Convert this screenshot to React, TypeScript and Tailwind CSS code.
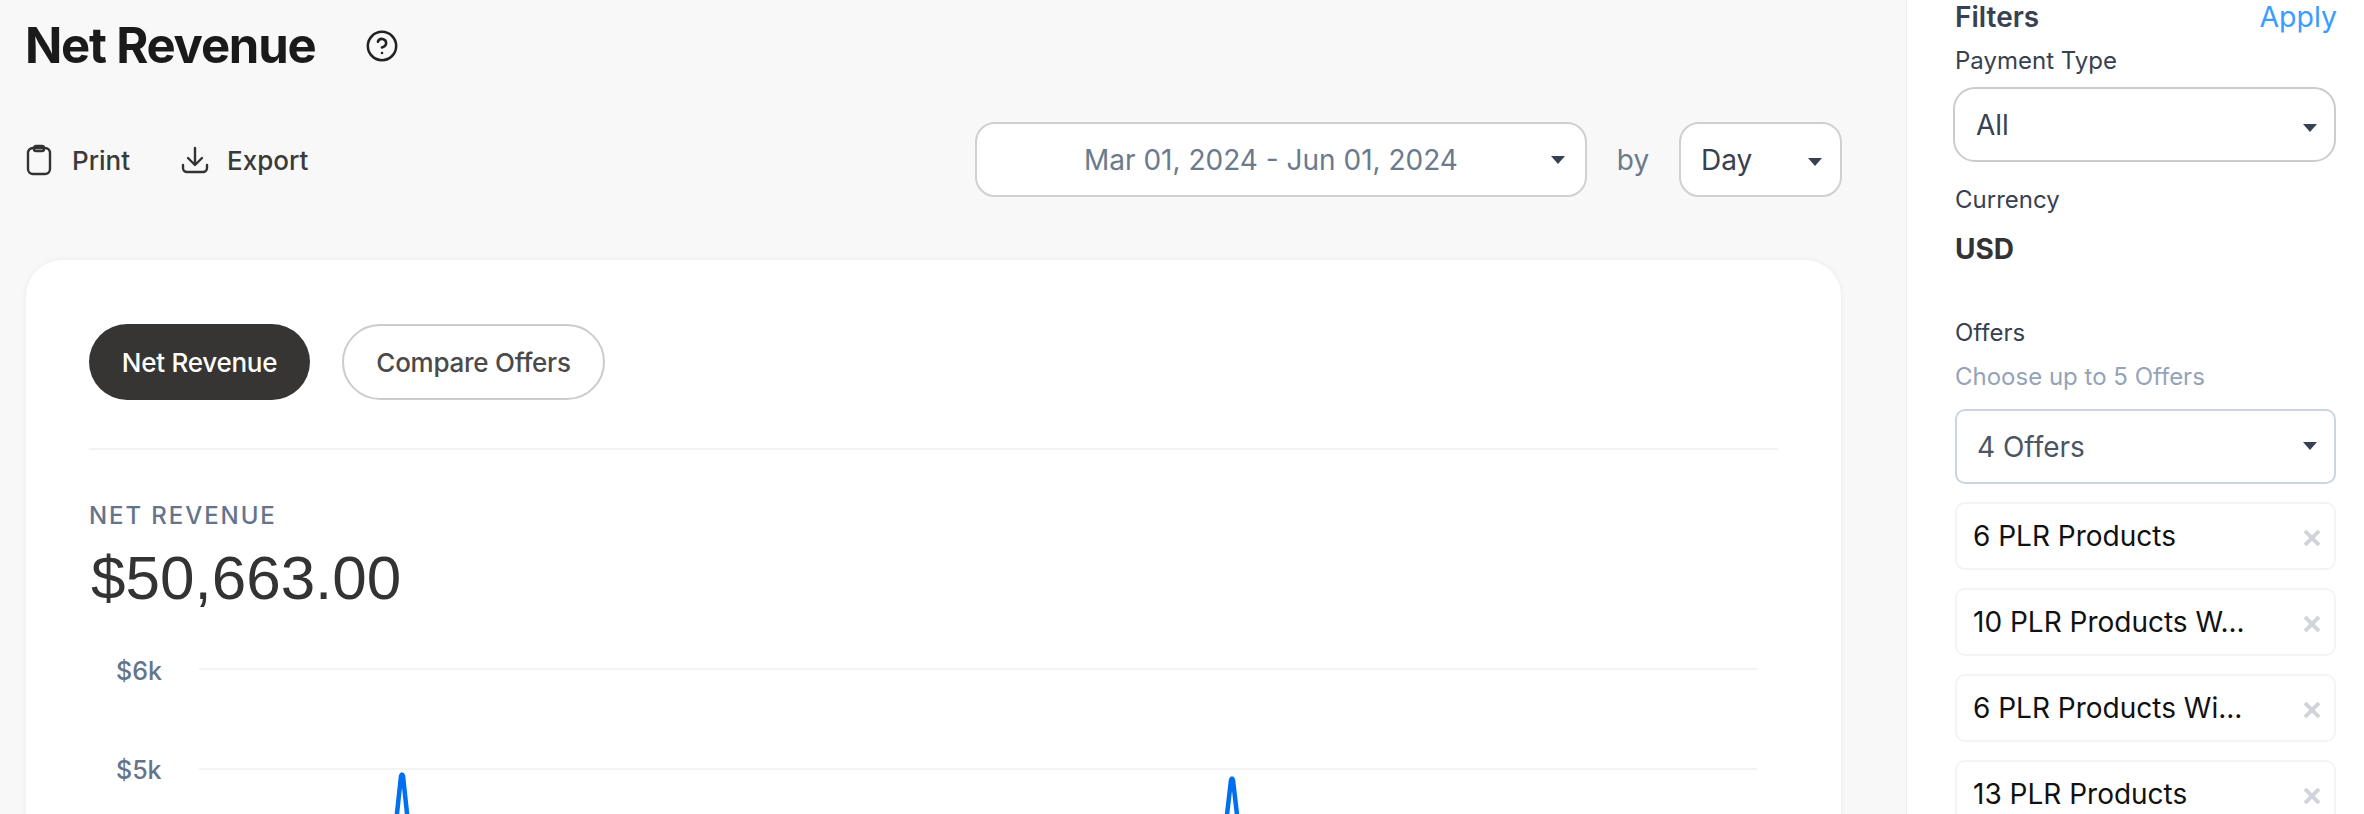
import { CircleHelp } from "lucide-react";

const offers = ["6 PLR Products", "10 PLR Products W...", "6 PLR Products Wi...", "13 PLR Products"];

const Caret = ({ className = "" }: { className?: string }) => (
  <span className={`w-0 h-0 border-x-[7px] border-x-transparent border-t-[8px] border-t-[#374151] ${className}`} />
);

const ClipboardIcon = () => (
  <svg width="26" height="32" viewBox="0 0 26 32" fill="none" stroke="#333" strokeWidth="2.4">
    <rect x="2" y="4" width="22" height="26" rx="5" />
    <rect x="8" y="2" width="10" height="5" rx="2" />
  </svg>
);

const ExportIcon = () => (
  <svg width="28" height="28" viewBox="0 0 28 28" fill="none" stroke="#333" strokeWidth="2.4" strokeLinecap="round" strokeLinejoin="round">
    <path d="M14 2v16" />
    <path d="M7 12l7 7 7-7" />
    <path d="M2 19v3a4 4 0 0 0 4 4h16a4 4 0 0 0 4-4v-3" />
  </svg>
);

function Chart() {
  return (
    <svg width="1690" height="180" viewBox="0 0 1690 180" className="block mt-[30px]">
      <text x="27" y="38" fontSize="25" fontWeight="500" fill="#64748b" fontFamily="Inter">$6k</text>
      <text x="27" y="137" fontSize="25" fontWeight="500" fill="#64748b" fontFamily="Inter">$5k</text>
      <line x1="110" y1="27" x2="1668" y2="27" stroke="#f3f3f3" strokeWidth="2" />
      <line x1="110" y1="127" x2="1668" y2="127" stroke="#f3f3f3" strokeWidth="2" />
      <path d="M306 190 L312 134 Q313 131 314 134 L320 190" fill="none" stroke="#0070f0" strokeWidth="4.5" strokeLinejoin="round" />
      <path d="M1136 190 L1142 138 Q1143 135 1144 138 L1150 190" fill="none" stroke="#0070f0" strokeWidth="4.5" strokeLinejoin="round" />
    </svg>
  );
}

export default function App() {
  return (
    <div className="flex h-[814px] overflow-hidden bg-[#f8f8f8] font-['Inter',sans-serif]">
      <main className="w-[1906px] shrink-0 pl-[26px] pr-[64px]">
        <div className="flex items-center h-[91px] gap-[50px]">
          <h1 className="text-[49px] font-bold leading-none tracking-[-0.025em] text-[#1a1a1a] -ml-[1px]">Net Revenue</h1>
          <CircleHelp size={34} strokeWidth={1.8} className="text-[#222]" />
        </div>

        <div className="flex items-center mt-[31px] h-[75px]">
          <button className="flex items-center gap-[20px] text-[26px] font-medium text-[#3a3a3a] pt-[1px]">
            <ClipboardIcon /> Print
          </button>
          <button className="flex items-center gap-[18px] ml-[51px] text-[26px] font-medium text-[#3a3a3a] pt-[1px]">
            <ExportIcon /> Export
          </button>
          <div className="ml-auto flex items-center">
            <div className="relative flex items-center justify-center w-[612px] h-[75px] bg-white border-2 border-[#d0d0d0] rounded-[20px] text-[28px] text-[#6b7a8c] pr-[20px]">
              Mar 01, 2024 - Jun 01, 2024
              <Caret className="absolute right-[20px] top-[32px]" />
            </div>
            <span className="w-[92px] text-center text-[28px] text-[#6b7a8c]">by</span>
            <div className="relative flex items-center w-[163px] h-[75px] bg-white border-2 border-[#d0d0d0] rounded-[20px] pl-[20px] text-[28px] text-[#374151]">
              Day
              <Caret className="absolute right-[18px] top-[34px]" />
            </div>
          </div>
        </div>

        <section className="mt-[63px] mr-[1px] h-[600px] bg-white rounded-[36px] shadow-[0_0_6px_rgba(0,0,0,0.06)] px-[63px] pt-[64px]">
          <div className="flex gap-[32px] pb-[48px] border-b-2 border-[#f2f2f2]">
            <button className="h-[76px] w-[221px] rounded-full bg-[#363533] text-white text-[26px] font-medium tracking-[-0.01em] pt-[1px]">Net Revenue</button>
            <button className="h-[76px] w-[263px] rounded-full bg-white border-2 border-[#cccccc] text-[#4a4a4a] text-[26px] font-medium tracking-[-0.01em] pt-[1px]">Compare Offers</button>
          </div>
          <div className="mt-[52px] text-[24px] leading-[28px] font-medium tracking-[0.08em] text-[#64748b]">NET REVENUE</div>
          <div className="mt-[14px] pl-[2px] text-[62px] leading-[68px] text-[#333] font-['Liberation_Sans',sans-serif]">$50,663.00</div>
          <Chart />
        </section>
      </main>

      <aside className="w-[458px] shrink-0 bg-white border-l border-[#eeeeee] pl-[46px] pr-[28px] text-[#374151]">
        <div className="flex items-center justify-between h-[34px] pl-[2px]">
          <span className="text-[28px] font-semibold leading-none">Filters</span>
          <span className="text-[28.500px] leading-none text-[#3b9cff] -mr-[1px]">Apply</span>
        </div>
        <div className="mt-[11px] pl-[2px] text-[24px] leading-[32px]">Payment Type</div>
        <div className="relative flex items-center h-[75px] mt-[10px] border-2 border-[#cccccc] rounded-[22px] pl-[21px] text-[28px]">
          All
          <Caret className="absolute right-[17px] top-[35px]" />
        </div>
        <div className="mt-[22px] pl-[2px] text-[24px] leading-[32px]">Currency</div>
        <div className="mt-[16px] pl-[2px] text-[28px] leading-[34px] font-bold text-[#333]">USD</div>
        <div className="mt-[51px] pl-[2px] text-[24px] leading-[32px]">Offers</div>
        <div className="mt-[12px] pl-[2px] text-[24px] leading-[32px] text-[#94a3b8]">Choose up to 5 Offers</div>
        <div className="relative flex items-center h-[75px] mt-[16px] ml-[2px] border-2 border-[#cbd5e1] rounded-[10px] pl-[20px] text-[28px] text-[#4b5563]">
          4 Offers
          <Caret className="absolute right-[17px] top-[31px]" />
        </div>
        <ul className="flex flex-col gap-[18px] mt-[18px] ml-[2px]">
          {offers.map((o) => (
            <li key={o} className="flex items-center justify-between h-[68px] shrink-0 border-2 border-[#f3f4f6] rounded-[10px] pl-[16px] pr-[14px] text-[28px] text-[#111]">
              <span className="-mt-[1px]">{o}</span>
              <svg width="16" height="16" viewBox="0 0 16 16" stroke="#d1d5db" strokeWidth="4" className="mt-[4px]">
                <path d="M1 1l14 14M15 1L1 15" />
              </svg>
            </li>
          ))}
        </ul>
      </aside>
    </div>
  );
}
